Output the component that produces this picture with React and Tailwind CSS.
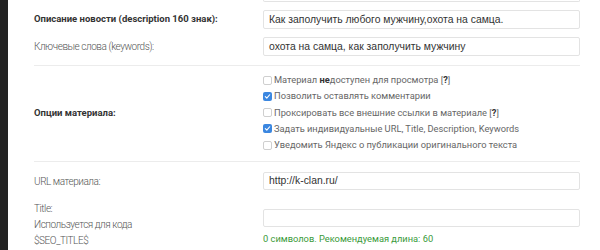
import React from "react";

const Check = ({ checked }) =>
  checked ? (
    <span className="w-[9px] h-[9px] rounded-[2px] bg-[#3b87e0] flex items-center justify-center shrink-0">
      <svg width="7" height="7" viewBox="0 0 8 8">
        <path d="M1.5 4.2 L3.2 5.8 L6.5 2" stroke="white" strokeWidth="1.3" fill="none" strokeLinecap="round" strokeLinejoin="round" />
      </svg>
    </span>
  ) : (
    <span className="w-[9px] h-[9px] rounded-[2px] border border-[#cfcfcf] bg-white shrink-0" />
  );

const Input = ({ value, h = "h-[19px]" }) => (
  <div
    className={`${h} w-full border border-[#e3e3e3] rounded-[2px] px-[5px] flex items-center text-[10.4px] text-[#333]`}
    style={{ fontFamily: "'Liberation Sans', Arial, sans-serif" }}
  >
    {value}
  </div>
);

const label = "w-[229px] shrink-0 text-[10px] font-light tracking-[-0.45px] text-[#555]";
const boldLabel = "w-[229px] shrink-0 text-[9.5px] font-bold text-[#333]";

export default function App() {
  const font = { fontFamily: "Roboto, 'Noto Sans', sans-serif" };
  return (
    <div className="w-[600px] h-[250px] overflow-hidden bg-white flex" style={font}>
      <div className="w-[8px] bg-[#232323] shrink-0" />
      <div className="flex-1 pl-[26px] pr-[20px] flex flex-col">
        <div className="flex">
          <div className="w-[229px] shrink-0" />
          <div className="flex-1 h-[2px] border border-t-0 border-[#e3e3e3] rounded-b-[2px]" />
        </div>
        <div className="flex items-center mt-[8px]">
          <div className={boldLabel}>Описание новости (description 160 знак):</div>
          <Input value="Как заполучить любого мужчину,охота на самца." />
        </div>
        <div className="flex items-center mt-[8px]">
          <div className={label}>Ключевые слова (keywords):</div>
          <Input value="охота на самца, как заполучить мужчину" />
        </div>
        <div className="h-px bg-[#ececec] mt-[9px]" />
        <div className="flex items-center pt-[6px] pb-[8px]">
          <div className={boldLabel}>Опции материала:</div>
          <div className="flex flex-col text-[9.3px] text-[#666] leading-[16.25px]">
            <div className="flex items-center gap-[2px]">
              <Check />
              <span>Материал <b className="text-[#333]">не</b>доступен для просмотра [<b className="text-[#333]">?</b>]</span>
            </div>
            <div className="flex items-center gap-[2px]">
              <Check checked />
              <span>Позволить оставлять комментарии</span>
            </div>
            <div className="flex items-center gap-[2px]">
              <Check />
              <span>Проксировать все внешние ссылки в материале [<b className="text-[#333]">?</b>]</span>
            </div>
            <div className="flex items-center gap-[2px]">
              <Check checked />
              <span>Задать индивидуальные URL, Title, Description, Keywords</span>
            </div>
            <div className="flex items-center gap-[2px]">
              <Check />
              <span>Уведомить Яндекс о публикации оригинального текста</span>
            </div>
          </div>
        </div>
        <div className="h-px bg-[#ececec]" />
        <div className="flex items-center mt-[10px]">
          <div className={label}>URL материала:</div>
          <Input value="http://k-clan.ru/" h="h-[18px]" />
        </div>
        <div className="flex mt-[11px]">
          <div className={`${label} leading-[16px]`}>
            <div>Title:</div>
            <div>Используется для кода</div>
            <div>$SEO_TITLE$</div>
          </div>
          <div className="flex-1 pt-[8px]">
            <Input value="" h="h-[18px]" />
            <div className="text-[9.3px] text-[#3a9a3a] mt-[5px]">0 символов. Рекомендуемая длина: 60</div>
          </div>
        </div>
      </div>
    </div>
  );
}
